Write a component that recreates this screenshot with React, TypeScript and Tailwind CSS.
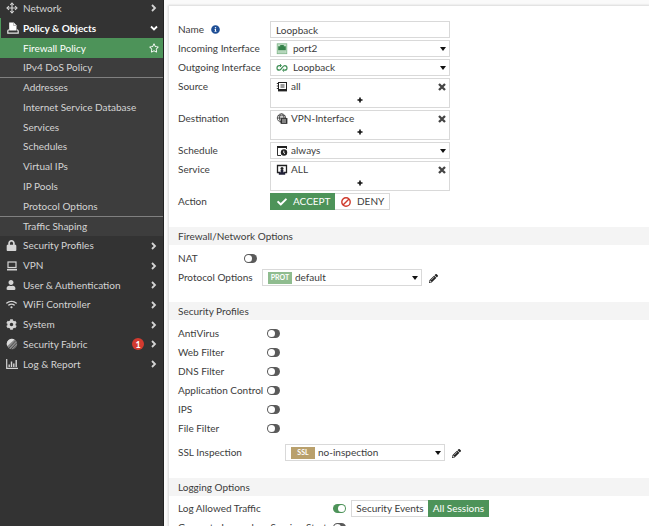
import { useState, type ReactNode } from "react";
import {
  FaCheck,
  FaCog,
  FaInfoCircle,
  FaLock,
  FaPencilAlt,
  FaRegStar,
  FaUser,
  FaWifi,
} from "react-icons/fa";

const POLICY_LINKS = ["Firewall Policy", "IPv4 DoS Policy"];

const OBJECT_LINKS = [
  "Addresses",
  "Internet Service Database",
  "Services",
  "Schedules",
  "Virtual IPs",
  "IP Pools",
  "Protocol Options",
];

const SECURITY_PROFILES = [
  "AntiVirus",
  "Web Filter",
  "DNS Filter",
  "Application Control",
  "IPS",
  "File Filter",
];

function MoveIcon() {
  return (
    <svg viewBox="0 0 12 12" className="size-3" fill="none" stroke="currentColor">
      <path d="M6 1.5V10.5M1.5 6H10.5" strokeWidth="1.2" />
      <path d="M4.2 3 6 1 7.8 3M4.2 9 6 11 7.8 9M3 4.2 1 6 3 7.8M9 4.2 11 6 9 7.8" strokeWidth="1.1" />
    </svg>
  );
}

function PolicyIcon() {
  return (
    <svg viewBox="0 0 12 12" className="size-3">
      <path d="M2.2 0.5H6.8L9.5 3.2V8.5H2.2Z" fill="#ffffff" />
      <path d="M6.6 0.8V3.5H9.3" fill="none" stroke="#555555" strokeWidth="0.4" />
      <path d="M1.6 7.5 0.8 9V11.2H11.2V9L10.2 7.5" fill="none" stroke="#e8e8e8" strokeWidth="1.2" />
    </svg>
  );
}

function LaptopIcon() {
  return (
    <svg viewBox="0 0 12 12" className="size-3" fill="none" stroke="currentColor">
      <rect x="2" y="2" width="8" height="5.5" strokeWidth="1.2" />
      <path d="M1 9.7H11" strokeWidth="1.6" />
    </svg>
  );
}

function FabricIcon() {
  return (
    <svg viewBox="0 0 12 12" className="size-3">
      <circle cx="6" cy="6" r="5.2" fill="#8a8a8a" />
      <path d="M1.2 8A5.2 5.2 0 0 1 8.5 1.4Z" fill="#dddddd" />
      <path d="M3 10 9.8 2.6M5 11 11 4.6M7.5 11 11 7.5" stroke="#333333" strokeWidth="0.7" />
    </svg>
  );
}

function ChartIcon() {
  return (
    <svg viewBox="0 0 12 12" className="size-3" fill="none" stroke="currentColor">
      <path d="M0.7 1V10.3H12" strokeWidth="1.2" />
      <path d="M3.2 9V6.5M5.5 9V3.5M7.8 9V5.5M10.2 9V2" strokeWidth="1.4" />
    </svg>
  );
}

function PortIcon() {
  return (
    <svg viewBox="0 0 12 12" className="size-3">
      <rect x="1.2" y="0.8" width="9.6" height="9.9" fill="#c4dfc9" stroke="#7db487" strokeWidth="0.8" />
      <path d="M2.2 7.2V3.2H4.2V2H7.8V3.2H9.8V7.2Z" fill="#35824a" />
      <path d="M2.5 9H9.5" stroke="#9cc7a4" strokeWidth="0.8" />
    </svg>
  );
}

function LoopIcon() {
  return (
    <svg viewBox="0 0 12 12" className="size-3" fill="none" stroke="#3f8f55" strokeWidth="1.2">
      <path d="M5 3.6H3.3A2.3 2.3 0 0 0 3.3 8.2C5.6 8.2 6.3 3.6 8.7 3.6A2.3 2.3 0 0 1 8.7 8.2H7" />
      <path d="M3.9 2.1 5.5 3.6 3.9 5.1M8.1 6.7 6.5 8.2 8.1 9.7" strokeWidth="1" />
    </svg>
  );
}

function AddressIcon() {
  return (
    <svg viewBox="0 0 12 12" className="size-3" fill="none" stroke="#222222">
      <rect x="2.5" y="1.5" width="8" height="7" />
      <path d="M4.5 4H8.5M4.5 6H8.5" strokeWidth="0.9" />
      <path d="M2 9.2H11" strokeWidth="2.4" />
      <path d="M0.8 2.5H2.5M0.8 5H2.5M0.8 7.5H2.5" strokeWidth="0.9" />
    </svg>
  );
}

function VpnIcon() {
  return (
    <svg viewBox="0 0 12 12" className="size-3" fill="none" stroke="#333333" strokeWidth="0.8">
      <circle cx="5.5" cy="5" r="4.2" />
      <path d="M1.3 5H9.7M5.5 0.8C2.8 3 2.8 7 5 9M5.5 0.8C7.6 2.3 8 3.5 8 5M2 2.8H9" />
      <rect x="5" y="5.5" width="6" height="5" fill="#333333" />
      <path d="M6 7H10M6 9H10" stroke="#ffffff" />
    </svg>
  );
}

function ScheduleIcon() {
  return (
    <svg viewBox="0 0 12 12" className="size-3">
      <path d="M5 10.5H1.5V1.5H10.5V4" fill="none" stroke="#333333" />
      <path d="M1 1H11V3H1Z" fill="#222222" />
      <circle cx="8" cy="7.5" r="3.2" fill="#222222" />
      <path d="M7.8 5.7V8L9 8.7" fill="none" stroke="#ffffff" strokeWidth="0.9" />
    </svg>
  );
}

function ServiceIcon() {
  return (
    <svg viewBox="0 0 12 12" className="size-3">
      <path d="M4 8.5H1.5V1.5H10.5V8.5H8" fill="none" stroke="#222222" strokeWidth="1.3" />
      <circle cx="6" cy="4.6" r="1.5" fill="#222222" />
      <path d="M4.6 6H7.4V8.3H9.2V10.7H2.8V8.3H4.6Z" fill="#222238" />
    </svg>
  );
}

function DenyIcon() {
  return (
    <svg viewBox="0 0 12 12" className="size-3" fill="none" stroke="#cf3a2c" strokeWidth="1.4">
      <circle cx="6" cy="6" r="4.2" />
      <path d="M3 9 9 3" />
    </svg>
  );
}

function ChevronIcon({ down = false }: { down?: boolean }) {
  return (
    <svg viewBox="0 0 8 8" className="size-2" fill="none" stroke="currentColor" strokeWidth="1.8">
      <path d={down ? "M1 2.5 4 5.5 7 2.5" : "M2 1 5 4 2 7"} />
    </svg>
  );
}

function RemoveIcon() {
  return (
    <svg viewBox="0 0 8 8" className="size-2" fill="none" stroke="#444444" strokeWidth="2.3">
      <path d="M1 1 7 7M7 1 1 7" />
    </svg>
  );
}

function PlusIcon() {
  return (
    <svg viewBox="0 0 6 6" className="size-[6px]" fill="none" stroke="#111111" strokeWidth="1.6">
      <path d="M3 0.5V5.5M0.5 3H5.5" />
    </svg>
  );
}

const MENU = [
  { label: "Security Profiles", icon: <FaLock className="size-[11px]" /> },
  { label: "VPN", icon: <LaptopIcon /> },
  { label: "User & Authentication", icon: <FaUser className="size-[10px]" /> },
  { label: "WiFi Controller", icon: <FaWifi className="size-[11px]" /> },
  { label: "System", icon: <FaCog className="size-[11px]" /> },
  { label: "Security Fabric", icon: <FabricIcon />, alerts: 1 },
  { label: "Log & Report", icon: <ChartIcon /> },
];

function MenuItem({ label, icon, alerts }: { label: string; icon: ReactNode; alerts?: number }) {
  return (
    <a href="#" className="flex items-center pr-[5px] pl-[6px]">
      <span className="flex w-[17px] items-center">{icon}</span>
      <span className="flex-1">{label}</span>
      {alerts && (
        <span className="mr-[6px] flex size-3 items-center justify-center rounded-full bg-[#d33a2f] text-[9px] font-bold text-white">
          {alerts}
        </span>
      )}
      <ChevronIcon />
    </a>
  );
}

function SubItem({ label }: { label: string }) {
  return (
    <a href="#" className="flex items-center pl-[23px]">
      {label}
    </a>
  );
}

function Sidebar() {
  return (
    <nav className="w-[164px] shrink-0 border-r border-[#222222] bg-[#333333] text-[#d4d4d4]">
      <div className="-mt-[2px] grid h-5">
        <MenuItem label="Network" icon={<MoveIcon />} />
      </div>
      <div className="bg-[#3d3d3d]">
        <a
          href="#"
          className="flex h-5 items-center border-l border-[#4e9a5b] bg-[#333333] pr-[5px] pl-[6px] font-bold text-white"
        >
          <span className="w-4">
            <PolicyIcon />
          </span>
          <span className="flex-1">Policy &amp; Objects</span>
          <ChevronIcon down />
        </a>
        <a
          href="#"
          className="flex h-5 items-center justify-between bg-[#4d9359] pr-1 pl-[23px] text-white"
        >
          {POLICY_LINKS[0]}
          <FaRegStar className="size-[10px]" />
        </a>
        <div className="grid h-5 border-b border-[#808080]">
          <SubItem label={POLICY_LINKS[1]} />
        </div>
        <div className="grid h-[139px] grid-rows-7 border-b border-[#808080]">
          {OBJECT_LINKS.map((label) => (
            <SubItem key={label} label={label} />
          ))}
        </div>
        <div className="grid h-[19px]">
          <SubItem label="Traffic Shaping" />
        </div>
      </div>
      <div className="grid h-[138px] grid-rows-7">
        {MENU.map((item) => (
          <MenuItem key={item.label} {...item} />
        ))}
      </div>
    </nav>
  );
}

function Row({ label, id, width, children }: { label: string; id: string; width: string; children: ReactNode }) {
  return (
    <div className="flex items-start">
      <label htmlFor={id} className={`${width} h-[17px] shrink-0 leading-[17px] whitespace-nowrap`}>
        {label}
        {id === "name" && <FaInfoCircle className="ml-[7px] inline size-[9px] align-[-1px] text-[#1f4f96]" />}
      </label>
      {children}
    </div>
  );
}

function SelectBox({
  id,
  value,
  icon,
  width,
  indent,
}: {
  id: string;
  value: string;
  icon: ReactNode;
  width: string;
  indent: string;
}) {
  return (
    <div className={`relative ${width}`}>
      <select
        id={id}
        className={`block h-[17px] w-full appearance-none border border-[#d9d9d9] bg-white leading-[15px] ${indent}`}
      >
        <option>{value}</option>
      </select>
      <span className="pointer-events-none absolute inset-y-0 left-[6px] flex items-center">{icon}</span>
      <span className="pointer-events-none absolute inset-y-0 right-1 flex items-center">
        <svg viewBox="0 0 6 4" className="h-1 w-[6px]">
          <path d="M0 0H6L3 4Z" fill="#111111" />
        </svg>
      </span>
    </div>
  );
}

function MultiBox({ id, value, icon }: { id: string; value: string; icon: ReactNode }) {
  return (
    <div className="h-[30px] w-[180px] border border-[#d9d9d9]">
      <div className="flex h-[15px] items-center pr-[3px] pl-[5px]">
        {icon}
        <span className="ml-[3px] flex-1">{value}</span>
        <button type="button" aria-label={`Remove ${value}`}>
          <RemoveIcon />
        </button>
      </div>
      <button id={id} type="button" aria-label="Add" className="flex h-3 w-full items-center justify-center">
        <PlusIcon />
      </button>
    </div>
  );
}

function Toggle({ id, on = false }: { id: string; on?: boolean }) {
  const [checked, setChecked] = useState(on);
  return (
    <input
      id={id}
      type="checkbox"
      role="switch"
      checked={checked}
      onChange={() => setChecked(!checked)}
      className="mt-1 flex h-[9px] w-[13px] shrink-0 appearance-none rounded-full bg-[#5a5a5a] p-px before:size-[7px] before:rounded-full before:bg-white checked:justify-end checked:bg-[#4d9359]"
    />
  );
}

function SectionTitle({ children }: { children: ReactNode }) {
  return <h2 className="h-[18px] bg-[#f4f4f4] pl-[9px] leading-[19px]">{children}</h2>;
}

function Tag({ label, color }: { label: string; color: string }) {
  return (
    <span className={`flex h-3 w-6 items-center justify-center text-[7px] font-bold text-white ${color}`}>
      {label}
    </span>
  );
}

function EditButton() {
  return (
    <button type="button" aria-label="Edit" className="ml-[7px] flex h-[17px] items-center pt-[2px]">
      <FaPencilAlt className="size-[9px] text-[#222222]" />
    </button>
  );
}

export default function App() {
  return (
    <div className="flex h-screen overflow-hidden bg-[#fafafa] font-[Lato,sans-serif] text-[10px] text-[#3c3c3c]">
      <Sidebar />

      <main className="mt-[6px] ml-[5px] min-w-0 flex-1 bg-white shadow-[0_0_2px_1px_#d8d8d8]">
        {/* Policy */}
        <div className="space-y-[2px] pt-[15px] pb-[17px] pl-[9px]">
          <Row label="Name" id="name" width="w-[92px]">
            <input
              id="name"
              defaultValue="Loopback"
              className="h-[17px] w-[180px] border border-[#d9d9d9] px-[5px]"
            />
          </Row>
          <Row label="Incoming Interface" id="incoming" width="w-[92px]">
            <SelectBox id="incoming" value="port2" icon={<PortIcon />} width="w-[180px]" indent="pl-[22px]" />
          </Row>
          <Row label="Outgoing Interface" id="outgoing" width="w-[92px]">
            <SelectBox id="outgoing" value="Loopback" icon={<LoopIcon />} width="w-[180px]" indent="pl-[22px]" />
          </Row>
          <Row label="Source" id="source" width="w-[92px]">
            <MultiBox id="source" value="all" icon={<AddressIcon />} />
          </Row>
          <Row label="Destination" id="destination" width="w-[92px]">
            <MultiBox id="destination" value="VPN-Interface" icon={<VpnIcon />} />
          </Row>
          <Row label="Schedule" id="schedule" width="w-[92px]">
            <SelectBox id="schedule" value="always" icon={<ScheduleIcon />} width="w-[180px]" indent="pl-[20px]" />
          </Row>
          <Row label="Service" id="service" width="w-[92px]">
            <MultiBox id="service" value="ALL" icon={<ServiceIcon />} />
          </Row>
          <Row label="Action" id="accept" width="w-[92px]">
            <button
              id="accept"
              type="button"
              className="flex h-[17px] w-[65px] items-center gap-[6px] bg-[#4d9359] pl-[7px] text-white"
            >
              <FaCheck className="size-[10px]" />
              ACCEPT
            </button>
            <button
              type="button"
              className="flex h-[17px] w-[55px] items-center gap-[5px] border border-l-0 border-[#d9d9d9] pl-[5px]"
            >
              <DenyIcon />
              DENY
            </button>
          </Row>
        </div>

        <SectionTitle>Firewall/Network Options</SectionTitle>
        <div className="space-y-[2px] pt-[5px] pb-4 pl-[9px]">
          <Row label="NAT" id="nat" width="w-[66px]">
            <Toggle id="nat" />
          </Row>
          <Row label="Protocol Options" id="protocol" width="w-[84px]">
            <SelectBox
              id="protocol"
              value="default"
              icon={<Tag label="PROT" color="bg-[#8fbc8f]" />}
              width="w-[160px]"
              indent="pl-[32px]"
            />
            <EditButton />
          </Row>
        </div>

        <SectionTitle>Security Profiles</SectionTitle>
        <div className="space-y-[2px] pt-[5px] pl-[9px]">
          {SECURITY_PROFILES.map((profile) => (
            <Row key={profile} label={profile} id={profile} width="w-[89px]">
              <Toggle id={profile} />
            </Row>
          ))}
        </div>
        <div className="pt-[7px] pb-[17px] pl-[9px]">
          <Row label="SSL Inspection" id="ssl" width="w-[107px]">
            <SelectBox
              id="ssl"
              value="no-inspection"
              icon={<Tag label="SSL" color="bg-[#b9a06c]" />}
              width="w-[160px]"
              indent="pl-[32px]"
            />
            <EditButton />
          </Row>
        </div>

        <SectionTitle>Logging Options</SectionTitle>
        <div className="space-y-[2px] pt-1 pl-[9px]">
          <Row label="Log Allowed Traffic" id="log" width="w-[155px]">
            <Toggle id="log" on />
            <button type="button" className="ml-[5px] h-[17px] w-[77px] border border-r-0 border-[#d9d9d9]">
              Security Events
            </button>
            <button type="button" className="h-[17px] w-[61px] bg-[#4d9359] text-white">
              All Sessions
            </button>
          </Row>
          <Row label="Generate Logs when Session Starts" id="log-start" width="w-[155px]">
            <Toggle id="log-start" />
          </Row>
        </div>
      </main>
    </div>
  );
}
